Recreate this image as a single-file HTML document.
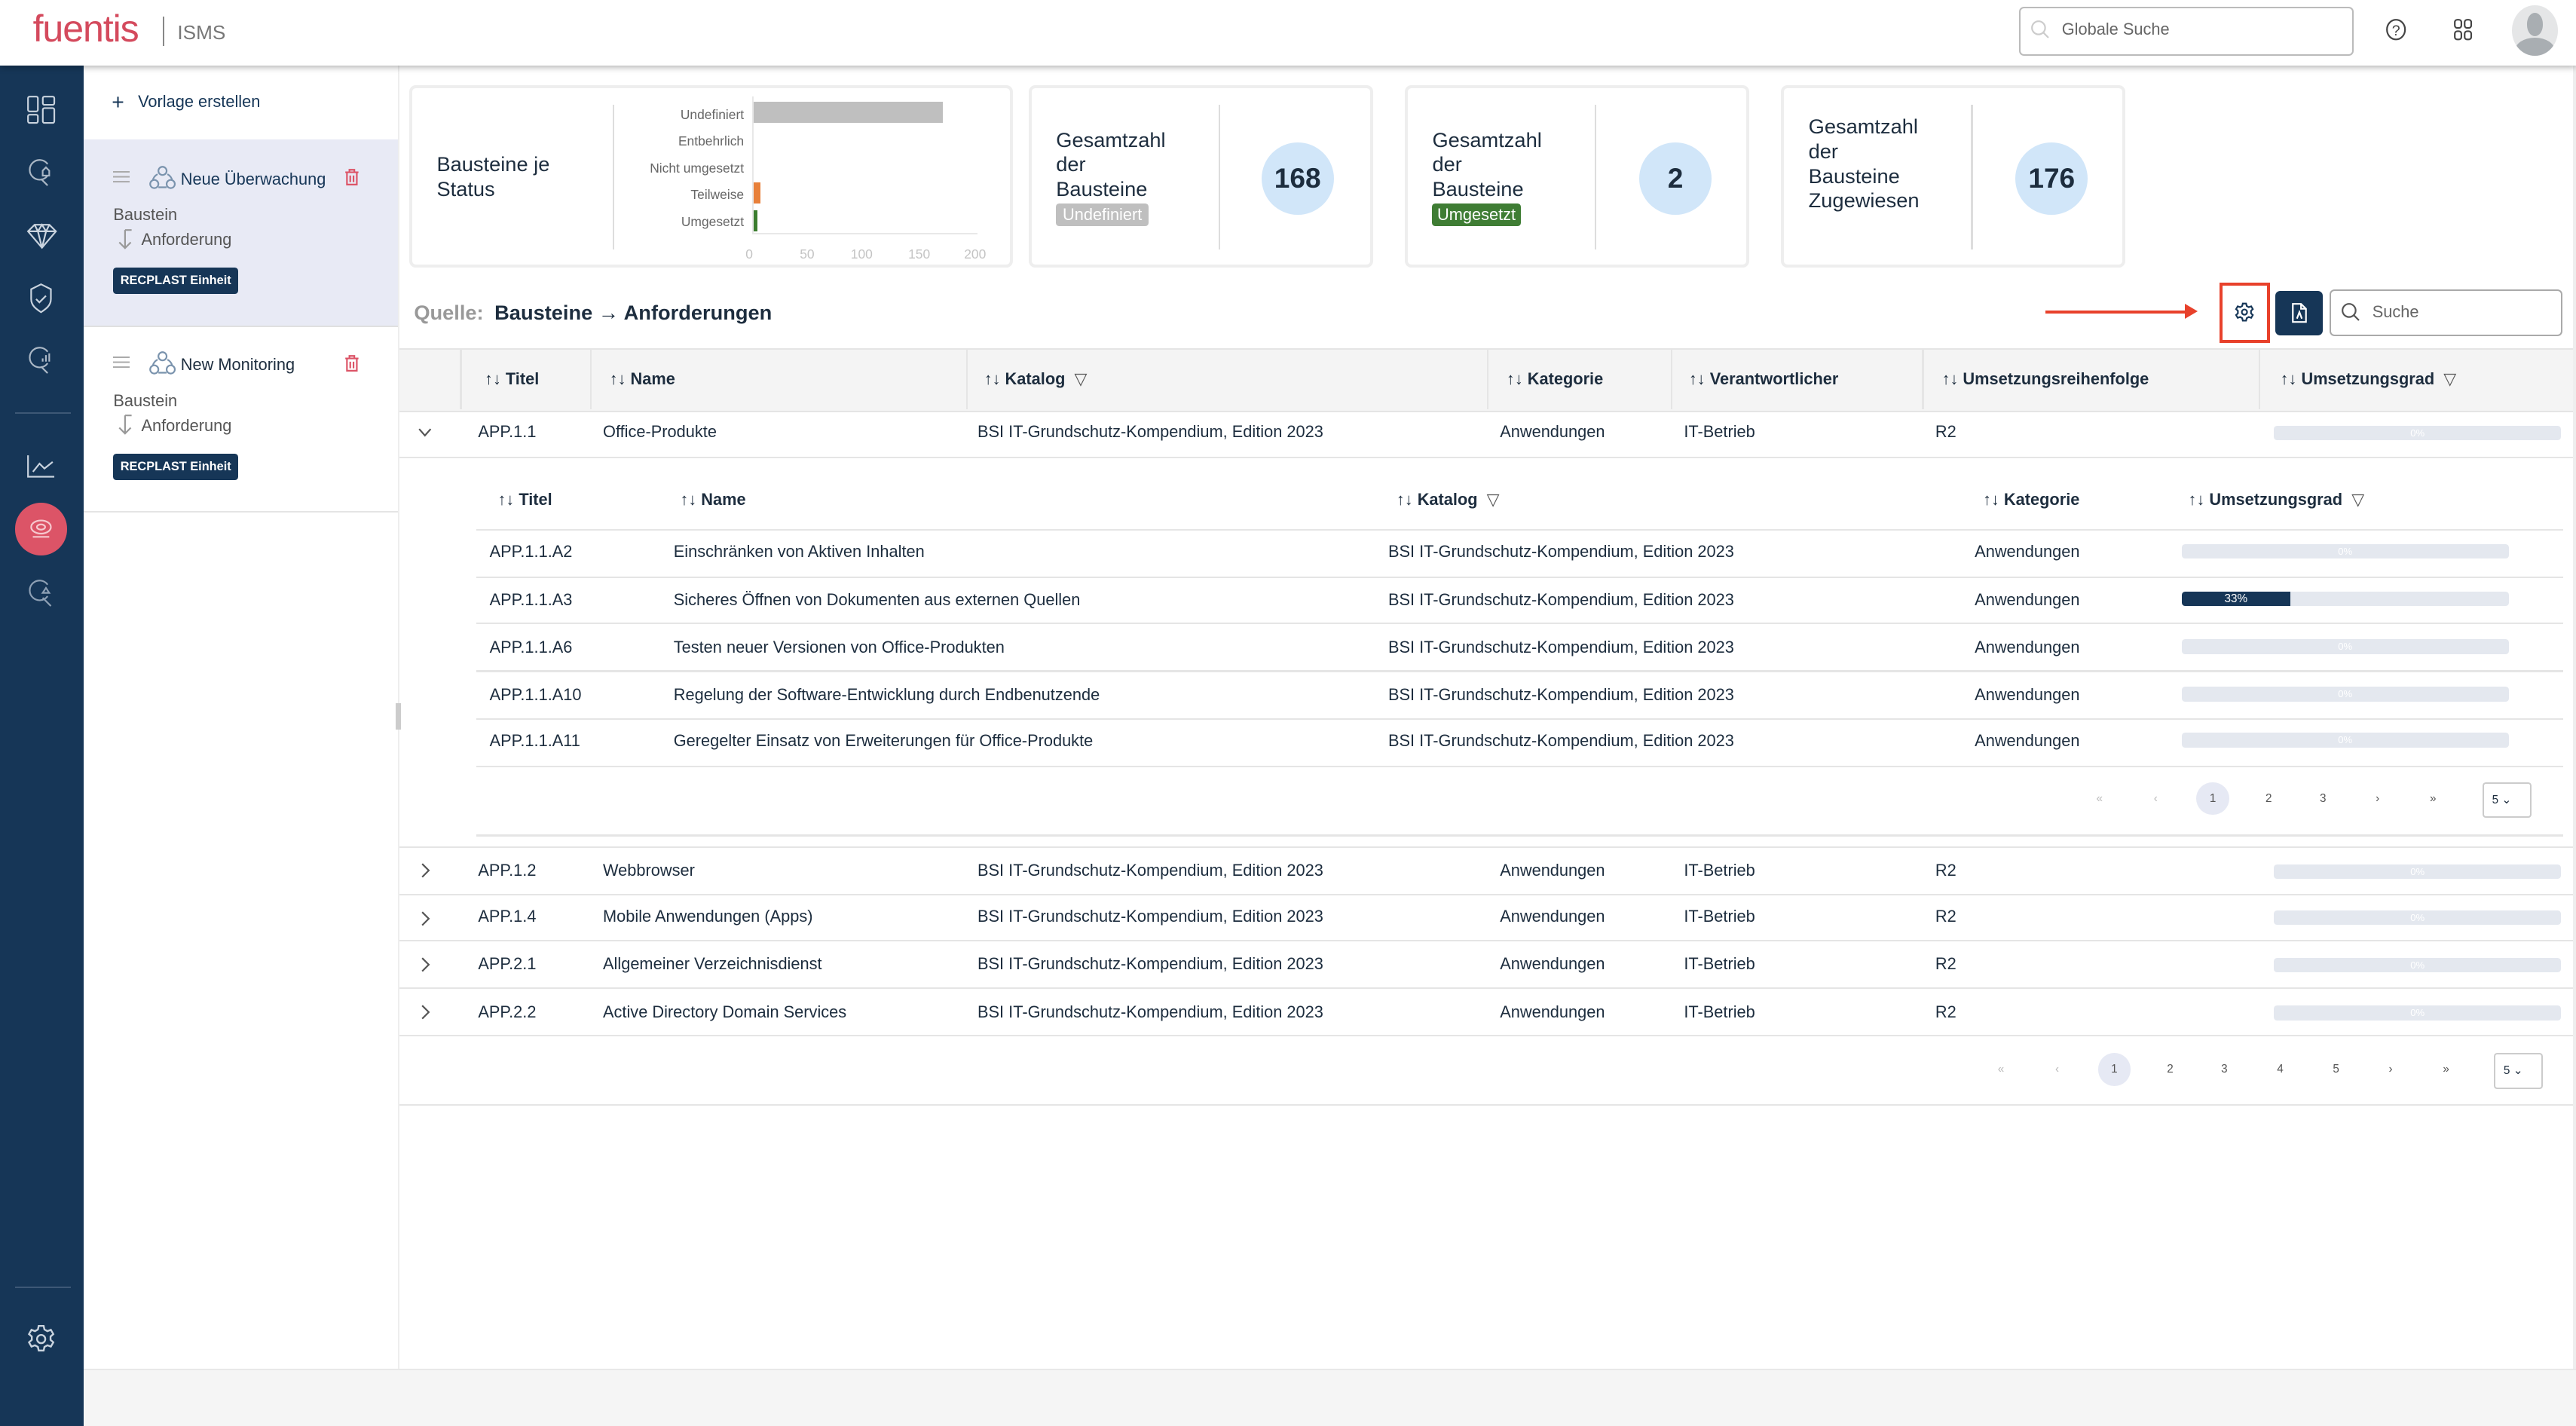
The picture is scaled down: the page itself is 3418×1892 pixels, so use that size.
<!DOCTYPE html>
<html><head><meta charset="utf-8"><style>
html,body{margin:0;padding:0;background:#fff;overflow:hidden}
body{width:3418px;height:1892px}
#r{position:absolute;left:0;top:0;width:1568px;height:868px;zoom:2.17985;font-family:"Liberation Sans",sans-serif;color:#1d2d3e;overflow:hidden}
.a{position:absolute}
.t{position:absolute;font-size:10px;white-space:nowrap;line-height:12px}
.h{position:absolute;font-size:10px;font-weight:bold;white-space:nowrap;line-height:12px;color:#1d2d3e}
.hl{position:absolute;height:1px;background:#e5e5e5}
.pb{position:absolute;height:9px;background:#e4e8ef;border-radius:2px;color:#fff;font-size:6px;line-height:9px;text-align:center}
.card{position:absolute;border:2px solid #eeeeee;border-radius:4px;background:#fff;top:52px;height:107px}
.pg{position:absolute;font-size:7px;color:#555;line-height:10px}
</style></head><body><div id="r">
<!-- header -->
<div class="a" style="left:0;top:0;width:1568px;height:40px;background:#fff;box-shadow:0 1px 4px rgba(0,0,0,.35);z-index:3">
  <div class="a" style="left:20px;top:4px;font-size:23px;color:#d44a5d;letter-spacing:-0.5px">fuentis</div>
  <div class="a" style="left:99px;top:10px;width:1px;height:18px;background:#888"></div>
  <div class="a" style="left:108px;top:13px;font-size:12px;color:#777">ISMS</div>
  <div class="a" style="left:1229px;top:4px;width:202px;height:28px;border:1px solid #bbb;border-radius:3px"></div>
  <svg class="a" style="left:1236px;top:12px" width="12" height="12"><circle cx="5" cy="5" r="4" fill="none" stroke="#ccc" stroke-width="1"/><path d="M8 8l3 3" stroke="#ccc"/></svg>
  <div class="a" style="left:1255px;top:12px;font-size:10px;color:#666">Globale Suche</div>
  <svg class="a" style="left:1452px;top:11px" width="13" height="14"><ellipse cx="6.5" cy="7" rx="5.5" ry="6" fill="none" stroke="#444" stroke-width="1"/><text x="4" y="10.5" font-size="9" fill="#444" font-family="Liberation Sans">?</text></svg>
  <svg class="a" style="left:1493px;top:11px" width="12" height="14"><rect x="1" y="1" width="4" height="5" rx="1.5" fill="none" stroke="#444"/><rect x="7" y="1" width="4" height="5" rx="1.5" fill="none" stroke="#444"/><rect x="1" y="8" width="4" height="5" rx="1.5" fill="none" stroke="#444"/><rect x="7" y="8" width="4" height="5" rx="1.5" fill="none" stroke="#444"/></svg>
  <div class="a" style="left:1529px;top:3px;width:28px;height:31px;border-radius:50%;background:#e5e6e7;overflow:hidden">
    <div class="a" style="left:9px;top:5px;width:10px;height:14px;border-radius:50%;background:#a9aeb2"></div>
    <div class="a" style="left:2px;top:20px;width:24px;height:16px;border-radius:50%;background:#a9aeb2"></div>
  </div>
</div>
<!-- sidebar -->
<div class="a" style="left:0;top:40px;width:51px;height:828px;background:#163657">
  <svg class="a" style="left:16px;top:18px" width="18" height="18" fill="none" stroke="#c9d3de" stroke-width="1"><rect x="1" y="1" width="6" height="9" rx="1"/><rect x="1" y="12" width="6" height="5" rx="1"/><rect x="10" y="1" width="7" height="5" rx="1"/><rect x="10" y="8" width="7" height="9" rx="1"/></svg>
  <svg class="a" style="left:17px;top:56px" width="18" height="18" fill="none" stroke="#aab7c5" stroke-width="1"><path d="M12 4a6 6 0 1 0 0 7"/><path d="M8 13l4 4"/><path d="M9 8l2-2 2 2v3h-4z"/></svg>
  <svg class="a" style="left:16px;top:96px" width="19" height="16" fill="none" stroke="#c9d3de" stroke-width="1"><path d="M1 5l4-4h9l4 4-8.5 10z M1 5h17 M5 1l2 4 2.5-4 2.5 4 2-4 M7 5l2.5 10 2.5-10"/></svg>
  <svg class="a" style="left:17px;top:132px" width="16" height="19" fill="none" stroke="#c9d3de" stroke-width="1"><path d="M8 1l6 3v6c0 4-3 6-6 8-3-2-6-4-6-8V4z"/><path d="M5 10l2 2 4-4"/></svg>
  <svg class="a" style="left:17px;top:170px" width="18" height="18" fill="none" stroke="#aab7c5" stroke-width="1"><path d="M12 4a6 6 0 1 0 0 7"/><path d="M8 13l4 4"/><path d="M9 10v-2M11 10v-4M13 10v-5"/></svg>
  <div class="a" style="left:9px;top:211px;width:34px;height:1px;background:#3d5876"></div>
  <svg class="a" style="left:16px;top:236px" width="18" height="16" fill="none" stroke="#c9d3de" stroke-width="1"><path d="M1 1v13h16"/><path d="M4 11l4-5 3 3 5-4"/></svg>
  <div class="a" style="left:9px;top:266px;width:32px;height:32px;border-radius:50%;background:#dc5467"></div>
  <svg class="a" style="left:17px;top:274px" width="16" height="16" fill="none" stroke="#f6c8ce" stroke-width="1"><ellipse cx="8" cy="7" rx="6" ry="4"/><ellipse cx="8" cy="7" rx="2.5" ry="1.6"/><path d="M3 13h10"/></svg>
  <svg class="a" style="left:17px;top:312px" width="18" height="18" fill="none" stroke="#8ea0b4" stroke-width="1"><path d="M12 4a6 6 0 1 0 0 7"/><path d="M9 12l5 5"/><path d="M9 9l2-3 2 3z"/></svg>
  <div class="a" style="left:9px;top:743px;width:34px;height:1px;background:#3d5876"></div>
  <svg class="a" style="left:16px;top:766px" width="18" height="18" fill="none" stroke="#c9d3de" stroke-width="1.1"><path d="M7.5 1h3l.5 2.2 1.8 1 2.1-.8 1.5 2.6-1.7 1.5v2l1.7 1.5-1.5 2.6-2.1-.8-1.8 1-.5 2.2h-3l-.5-2.2-1.8-1-2.1.8-1.5-2.6 1.7-1.5v-2L1.6 6l1.5-2.6 2.1.8 1.8-1z"/><circle cx="9" cy="9" r="2.5"/></svg>
</div>
<!-- left panel -->
<div class="a" style="left:51px;top:40px;width:191px;height:793px;background:#fff;border-right:1px solid #eee">
  <div class="a" style="left:17px;top:15px;font-size:13px;color:#163657">+</div>
  <div class="t" style="left:33px;top:16px;color:#163657">Vorlage erstellen</div>
  <div class="a" style="left:0;top:45px;width:191px;height:113px;background:#e8eaf5;border-bottom:1px solid #e0e0e0"></div>
  <div class="a" style="left:0;top:271px;width:191px;height:1px;background:#e5e5e5"></div>
</div>
<!-- items -->
<div class="a" style="left:69px;top:104px;width:10px;height:1px;background:#aaa;box-shadow:0 3px 0 #aaa,0 6px 0 #aaa"></div>
<svg class="a" style="left:90px;top:100px" width="18" height="16" fill="none" stroke="#7a93ad" stroke-width="1"><circle cx="9" cy="4" r="2.5"/><circle cx="4" cy="12" r="2.5"/><circle cx="14" cy="12" r="2.5"/><path d="M6 6a6 6 0 0 0-3 4M12 6a6 6 0 0 1 3 4M6.5 14h5"/></svg>
<div class="t" style="left:110px;top:103px;color:#163657">Neue Überwachung</div>
<svg class="a" style="left:209px;top:102px" width="10" height="12" fill="none" stroke="#dc5467" stroke-width="1"><path d="M1 3h8M3.5 3V1.5h3V3M2 3v7.5h6V3M4 5v4M6 5v4"/></svg>
<div class="t" style="left:69px;top:125px;color:#555">Baustein</div>
<svg class="a" style="left:71px;top:139px" width="10" height="13" fill="none" stroke="#999" stroke-width="1"><path d="M5 1v11M1.5 8.5L5 12l3.5-3.5M5 1h4"/></svg>
<div class="t" style="left:86px;top:140px;color:#555">Anforderung</div>
<div class="a" style="left:69px;top:163px;width:76px;height:16px;background:#163657;border-radius:2px;color:#fff;font-size:7.5px;font-weight:bold;line-height:16px;text-align:center">RECPLAST Einheit</div>

<div class="a" style="left:69px;top:217px;width:10px;height:1px;background:#aaa;box-shadow:0 3px 0 #aaa,0 6px 0 #aaa"></div>
<svg class="a" style="left:90px;top:213px" width="18" height="16" fill="none" stroke="#7a93ad" stroke-width="1"><circle cx="9" cy="4" r="2.5"/><circle cx="4" cy="12" r="2.5"/><circle cx="14" cy="12" r="2.5"/><path d="M6 6a6 6 0 0 0-3 4M12 6a6 6 0 0 1 3 4M6.5 14h5"/></svg>
<div class="t" style="left:110px;top:216px;color:#1d2d3e">New Monitoring</div>
<svg class="a" style="left:209px;top:215px" width="10" height="12" fill="none" stroke="#dc5467" stroke-width="1"><path d="M1 3h8M3.5 3V1.5h3V3M2 3v7.5h6V3M4 5v4M6 5v4"/></svg>
<div class="t" style="left:69px;top:238px;color:#555">Baustein</div>
<svg class="a" style="left:71px;top:252px" width="10" height="13" fill="none" stroke="#999" stroke-width="1"><path d="M5 1v11M1.5 8.5L5 12l3.5-3.5M5 1h4"/></svg>
<div class="t" style="left:86px;top:253px;color:#555">Anforderung</div>
<div class="a" style="left:69px;top:276px;width:76px;height:16px;background:#163657;border-radius:2px;color:#fff;font-size:7.5px;font-weight:bold;line-height:16px;text-align:center">RECPLAST Einheit</div>
<div class="a" style="left:241px;top:428px;width:3px;height:16px;background:#ccc"></div>

<!-- cards -->
<div class="card" style="left:249px;width:364px">
  <div class="a" style="left:15px;top:39px;font-size:12.5px;line-height:15px;color:#1d2d3e">Bausteine je<br>Status</div>
  <div class="a" style="left:122px;top:10px;width:1px;height:88px;background:#ddd"></div>
  <div class="a" style="right:162px;top:8px;font-size:8px;line-height:16.3px;color:#666;text-align:right">Undefiniert<br>Entbehrlich<br>Nicht umgesetzt<br>Teilweise<br>Umgesetzt</div>
  <div class="a" style="left:207px;top:5px;width:1px;height:83px;background:#e8e8e8"></div>
  <div class="a" style="left:207px;top:88px;width:137px;height:1px;background:#e8e8e8"></div>
  <div class="a" style="left:208px;top:8px;width:115px;height:13px;background:#bfbfbf"></div>
  <div class="a" style="left:208px;top:57px;width:4px;height:13px;background:#e8803a"></div>
  <div class="a" style="left:208px;top:74px;width:2px;height:13px;background:#3b7d2e"></div>
  <div class="a" style="left:203px;top:96px;font-size:8px;color:#c4c4c4">0</div>
  <div class="a" style="left:236px;top:96px;font-size:8px;color:#c4c4c4">50</div>
  <div class="a" style="left:267px;top:96px;font-size:8px;color:#c4c4c4">100</div>
  <div class="a" style="left:302px;top:96px;font-size:8px;color:#c4c4c4">150</div>
  <div class="a" style="left:336px;top:96px;font-size:8px;color:#c4c4c4">200</div>
</div>
<div class="card" style="left:626px;width:206px">
  <div class="a" style="left:15px;top:24px;font-size:12.5px;line-height:15px">Gesamtzahl<br>der<br>Bausteine</div>
  <div class="a" style="left:15px;top:70px;background:#bfbfbf;color:#fff;font-size:10px;padding:0 4px;border-radius:2px;line-height:14px">Undefiniert</div>
  <div class="a" style="left:114px;top:10px;width:1px;height:88px;background:#ddd"></div>
  <div class="a" style="left:140px;top:33px;width:44px;height:44px;border-radius:50%;background:#d1e6f9;font-weight:bold;font-size:17px;line-height:44px;text-align:center">168</div>
</div>
<div class="card" style="left:855px;width:206px">
  <div class="a" style="left:15px;top:24px;font-size:12.5px;line-height:15px">Gesamtzahl<br>der<br>Bausteine</div>
  <div class="a" style="left:15px;top:70px;background:#3f7d34;color:#fff;font-size:10px;padding:0 3px;border-radius:2px;line-height:14px">Umgesetzt</div>
  <div class="a" style="left:114px;top:10px;width:1px;height:88px;background:#ddd"></div>
  <div class="a" style="left:141px;top:33px;width:44px;height:44px;border-radius:50%;background:#d1e6f9;font-weight:bold;font-size:17px;line-height:44px;text-align:center">2</div>
</div>
<div class="card" style="left:1084px;width:206px">
  <div class="a" style="left:15px;top:16px;font-size:12.5px;line-height:15px">Gesamtzahl<br>der<br>Bausteine<br>Zugewiesen</div>
  <div class="a" style="left:114px;top:10px;width:1px;height:88px;background:#ddd"></div>
  <div class="a" style="left:141px;top:33px;width:44px;height:44px;border-radius:50%;background:#d1e6f9;font-weight:bold;font-size:17px;line-height:44px;text-align:center">176</div>
</div>

<!-- toolbar -->
<div class="a" style="left:252px;top:183px;font-size:12.5px;color:#999;font-weight:bold">Quelle:</div>
<div class="a" style="left:301px;top:183px;font-size:12.5px;color:#1d2d3e;font-weight:bold">Bausteine → Anforderungen</div>
<div class="a" style="left:1245px;top:189px;width:87px;height:2px;background:#e8412b"></div>
<div class="a" style="left:1330px;top:185px;width:0;height:0;border-left:8px solid #e8412b;border-top:5px solid transparent;border-bottom:5px solid transparent"></div>
<div class="a" style="left:1351px;top:172px;width:27px;height:33px;border:2px solid #e8412b"></div>
<svg class="a" style="left:1360px;top:184px" width="12" height="12" fill="none" stroke="#163657" stroke-width="1"><path d="M5 .8h2l.4 1.5 1.2.7 1.5-.5 1 1.7-1.1 1v1.6l1.1 1-1 1.7-1.5-.5-1.2.7L7 11.2H5l-.4-1.5-1.2-.7-1.5.5-1-1.7 1.1-1V5.2l-1.1-1 1-1.7 1.5.5 1.2-.7z"/><circle cx="6" cy="6" r="1.6"/></svg>
<div class="a" style="left:1385px;top:177px;width:29px;height:27px;background:#163657;border-radius:3px"></div>
<svg class="a" style="left:1394px;top:184px" width="11" height="13" fill="none" stroke="#fff" stroke-width="1"><path d="M1.5 1h5l3 3v8h-8z M6.5 1v3h3 M4 10l1.5-4 1.5 4"/></svg>
<div class="a" style="left:1418px;top:176px;width:140px;height:27px;border:1px solid #aaa;border-radius:3px"></div>
<svg class="a" style="left:1425px;top:184px" width="12" height="12" fill="none" stroke="#555" stroke-width="1"><circle cx="5" cy="5" r="4"/><path d="M8 8l3 3"/></svg>
<div class="a" style="left:1444px;top:184px;font-size:10px;color:#666">Suche</div>

<!-- main table header -->
<div class="a" style="left:243px;top:212px;width:1325px;height:37px;background:#f4f4f4;border-top:1px solid #e5e5e5;border-bottom:1px solid #e5e5e5"></div>
<div class="a" style="left:280px;top:213px;width:1px;height:36px;background:#e5e5e5"></div>
<div class="a" style="left:359px;top:213px;width:1px;height:36px;background:#e5e5e5"></div>
<div class="a" style="left:588px;top:213px;width:1px;height:36px;background:#e5e5e5"></div>
<div class="a" style="left:905px;top:213px;width:1px;height:36px;background:#e5e5e5"></div>
<div class="a" style="left:1017px;top:213px;width:1px;height:36px;background:#e5e5e5"></div>
<div class="a" style="left:1170px;top:213px;width:1px;height:36px;background:#e5e5e5"></div>
<div class="a" style="left:1375px;top:213px;width:1px;height:36px;background:#e5e5e5"></div>
<div class="h" style="left:295px;top:225px">↑↓ Titel</div>
<div class="h" style="left:371px;top:225px">↑↓ Name</div>
<div class="h" style="left:599px;top:225px">↑↓ Katalog <span style="font-weight:normal;color:#555">&nbsp;▽</span></div>
<div class="h" style="left:917px;top:225px">↑↓ Kategorie</div>
<div class="h" style="left:1028px;top:225px">↑↓ Verantwortlicher</div>
<div class="h" style="left:1182px;top:225px">↑↓ Umsetzungsreihenfolge</div>
<div class="h" style="left:1388px;top:225px">↑↓ Umsetzungsgrad <span style="font-weight:normal;color:#555">&nbsp;▽</span></div>

<!-- row 1 -->
<svg class="a" style="left:254px;top:260px" width="9" height="6" fill="none" stroke="#555"><path d="M1 1l3.5 4 3.5-4"/></svg>
<div class="t" style="left:291px;top:257px">APP.1.1</div>
<div class="t" style="left:367px;top:257px">Office-Produkte</div>
<div class="t" style="left:595px;top:257px">BSI IT-Grundschutz-Kompendium, Edition 2023</div>
<div class="t" style="left:913px;top:257px">Anwendungen</div>
<div class="t" style="left:1025px;top:257px">IT-Betrieb</div>
<div class="t" style="left:1178px;top:257px">R2</div>
<div class="pb" style="left:1384px;top:259px;width:175px">0%</div>
<div class="hl" style="left:243px;top:278px;width:1325px"></div>

<!-- sub table -->
<div class="h" style="left:303px;top:298px">↑↓ Titel</div>
<div class="h" style="left:414px;top:298px">↑↓ Name</div>
<div class="h" style="left:850px;top:298px">↑↓ Katalog <span style="font-weight:normal;color:#555">&nbsp;▽</span></div>
<div class="h" style="left:1207px;top:298px">↑↓ Kategorie</div>
<div class="h" style="left:1332px;top:298px">↑↓ Umsetzungsgrad <span style="font-weight:normal;color:#555">&nbsp;▽</span></div>
<div class="hl" style="left:290px;top:322px;width:1270px"></div>
<div class="t" style="left:298px;top:330px">APP.1.1.A2</div><div class="t" style="left:410px;top:330px">Einschränken von Aktiven Inhalten</div><div class="t" style="left:845px;top:330px">BSI IT-Grundschutz-Kompendium, Edition 2023</div><div class="t" style="left:1202px;top:330px">Anwendungen</div><div class="pb" style="left:1328px;top:331px;width:199px">0%</div>
<div class="hl" style="left:290px;top:351px;width:1270px"></div>
<div class="t" style="left:298px;top:359px">APP.1.1.A3</div><div class="t" style="left:410px;top:359px">Sicheres Öffnen von Dokumenten aus externen Quellen</div><div class="t" style="left:845px;top:359px">BSI IT-Grundschutz-Kompendium, Edition 2023</div><div class="t" style="left:1202px;top:359px">Anwendungen</div><div class="pb" style="left:1328px;top:360px;width:199px"><div class="a" style="left:0;top:0;width:66px;height:9px;background:#163657;border-radius:2px 0 0 2px;color:#fff;font-size:7px">33%</div></div>
<div class="hl" style="left:290px;top:379px;width:1270px"></div>
<div class="t" style="left:298px;top:388px">APP.1.1.A6</div><div class="t" style="left:410px;top:388px">Testen neuer Versionen von Office-Produkten</div><div class="t" style="left:845px;top:388px">BSI IT-Grundschutz-Kompendium, Edition 2023</div><div class="t" style="left:1202px;top:388px">Anwendungen</div><div class="pb" style="left:1328px;top:389px;width:199px">0%</div>
<div class="hl" style="left:290px;top:408px;width:1270px"></div>
<div class="t" style="left:298px;top:417px">APP.1.1.A10</div><div class="t" style="left:410px;top:417px">Regelung der Software-Entwicklung durch Endbenutzende</div><div class="t" style="left:845px;top:417px">BSI IT-Grundschutz-Kompendium, Edition 2023</div><div class="t" style="left:1202px;top:417px">Anwendungen</div><div class="pb" style="left:1328px;top:418px;width:199px">0%</div>
<div class="hl" style="left:290px;top:437px;width:1270px"></div>
<div class="t" style="left:298px;top:445px">APP.1.1.A11</div><div class="t" style="left:410px;top:445px">Geregelter Einsatz von Erweiterungen für Office-Produkte</div><div class="t" style="left:845px;top:445px">BSI IT-Grundschutz-Kompendium, Edition 2023</div><div class="t" style="left:1202px;top:445px">Anwendungen</div><div class="pb" style="left:1328px;top:446px;width:199px">0%</div>
<div class="hl" style="left:290px;top:466px;width:1270px"></div>
<!-- sub pagination -->
<div class="pg" style="left:1276px;top:481px;color:#bbb">«</div>
<div class="pg" style="left:1311px;top:481px;color:#bbb">‹</div>
<div class="a" style="left:1337px;top:476px;width:20px;height:20px;border-radius:50%;background:#e6e9f4"></div>
<div class="pg" style="left:1345px;top:481px">1</div>
<div class="pg" style="left:1379px;top:481px">2</div>
<div class="pg" style="left:1412px;top:481px">3</div>
<div class="pg" style="left:1446px;top:481px">›</div>
<div class="pg" style="left:1479px;top:481px">»</div>
<div class="a" style="left:1511px;top:476px;width:28px;height:20px;border:1px solid #ccc;border-radius:2px;font-size:7px;line-height:20px;text-indent:5px">5 ⌄</div>
<div class="hl" style="left:290px;top:508px;width:1270px"></div>
<div class="hl" style="left:243px;top:515px;width:1325px"></div>

<!-- more rows -->
<svg class="a" style="left:256px;top:525px" width="6" height="10" fill="none" stroke="#555"><path d="M1 1l4 4-4 4"/></svg>
<div class="t" style="left:291px;top:524px">APP.1.2</div><div class="t" style="left:367px;top:524px">Webbrowser</div><div class="t" style="left:595px;top:524px">BSI IT-Grundschutz-Kompendium, Edition 2023</div><div class="t" style="left:913px;top:524px">Anwendungen</div><div class="t" style="left:1025px;top:524px">IT-Betrieb</div><div class="t" style="left:1178px;top:524px">R2</div><div class="pb" style="left:1384px;top:526px;width:175px">0%</div>
<div class="hl" style="left:243px;top:544px;width:1325px"></div>
<svg class="a" style="left:256px;top:554px" width="6" height="10" fill="none" stroke="#555"><path d="M1 1l4 4-4 4"/></svg>
<div class="t" style="left:291px;top:552px">APP.1.4</div><div class="t" style="left:367px;top:552px">Mobile Anwendungen (Apps)</div><div class="t" style="left:595px;top:552px">BSI IT-Grundschutz-Kompendium, Edition 2023</div><div class="t" style="left:913px;top:552px">Anwendungen</div><div class="t" style="left:1025px;top:552px">IT-Betrieb</div><div class="t" style="left:1178px;top:552px">R2</div><div class="pb" style="left:1384px;top:554px;width:175px">0%</div>
<div class="hl" style="left:243px;top:572px;width:1325px"></div>
<svg class="a" style="left:256px;top:582px" width="6" height="10" fill="none" stroke="#555"><path d="M1 1l4 4-4 4"/></svg>
<div class="t" style="left:291px;top:581px">APP.2.1</div><div class="t" style="left:367px;top:581px">Allgemeiner Verzeichnisdienst</div><div class="t" style="left:595px;top:581px">BSI IT-Grundschutz-Kompendium, Edition 2023</div><div class="t" style="left:913px;top:581px">Anwendungen</div><div class="t" style="left:1025px;top:581px">IT-Betrieb</div><div class="t" style="left:1178px;top:581px">R2</div><div class="pb" style="left:1384px;top:583px;width:175px">0%</div>
<div class="hl" style="left:243px;top:601px;width:1325px"></div>
<svg class="a" style="left:256px;top:611px" width="6" height="10" fill="none" stroke="#555"><path d="M1 1l4 4-4 4"/></svg>
<div class="t" style="left:291px;top:610px">APP.2.2</div><div class="t" style="left:367px;top:610px">Active Directory Domain Services</div><div class="t" style="left:595px;top:610px">BSI IT-Grundschutz-Kompendium, Edition 2023</div><div class="t" style="left:913px;top:610px">Anwendungen</div><div class="t" style="left:1025px;top:610px">IT-Betrieb</div><div class="t" style="left:1178px;top:610px">R2</div><div class="pb" style="left:1384px;top:612px;width:175px">0%</div>
<div class="hl" style="left:243px;top:630px;width:1325px"></div>
<!-- main pagination -->
<div class="pg" style="left:1216px;top:646px;color:#bbb">«</div>
<div class="pg" style="left:1251px;top:646px;color:#bbb">‹</div>
<div class="a" style="left:1277px;top:641px;width:20px;height:20px;border-radius:50%;background:#e6e9f4"></div>
<div class="pg" style="left:1285px;top:646px">1</div>
<div class="pg" style="left:1319px;top:646px">2</div>
<div class="pg" style="left:1352px;top:646px">3</div>
<div class="pg" style="left:1386px;top:646px">4</div>
<div class="pg" style="left:1420px;top:646px">5</div>
<div class="pg" style="left:1454px;top:646px">›</div>
<div class="pg" style="left:1487px;top:646px">»</div>
<div class="a" style="left:1518px;top:641px;width:28px;height:20px;border:1px solid #ccc;border-radius:2px;font-size:7px;line-height:20px;text-indent:5px">5 ⌄</div>
<div class="hl" style="left:243px;top:672px;width:1325px"></div>
<div class="a" style="left:1566px;top:40px;width:2px;height:793px;background:#eee"></div>
<!-- bottom -->
<div class="a" style="left:51px;top:833px;width:1517px;height:35px;background:#f5f5f5;border-top:1px solid #e8e8e8"></div>
</div></body></html>
